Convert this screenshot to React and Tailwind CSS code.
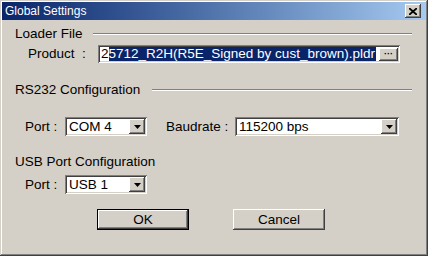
const raised =
  "shadow-[inset_-1px_-1px_#404040,inset_1px_1px_#ffffff,inset_-2px_-2px_#808080,inset_2px_2px_#d4d0c8]";
const sunken =
  "shadow-[inset_1px_1px_#808080,inset_-1px_-1px_#ffffff,inset_2px_2px_#404040,inset_-2px_-2px_#d4d0c8]";

const Arrow = () => (
  <div className={`flex h-full w-[16px] items-center justify-center bg-[#d4d0c8] ${raised}`}>
    <svg width="7" height="4" viewBox="0 0 7 4">
      <path d="M0 0h7L3.5 4z" fill="#000" />
    </svg>
  </div>
);

const Combo = ({ value, width }) => (
  <div className={`flex h-[19px] items-stretch bg-white p-[2px] ${sunken} ${width}`}>
    <span className="flex-1 pl-[2px] leading-[15px]">{value}</span>
    <Arrow />
  </div>
);

const GroupTitle = ({ children, gap }) => (
  <div className="flex items-center pl-[13px] pr-[14px]">
    <span className="leading-[16px]">{children}</span>
    <div className={`h-0 flex-1 border-t border-b border-t-[#808080] border-b-white ${gap}`} />
  </div>
);

export default function App() {
  return (
    <div
      className="h-[256px] w-[428px] bg-[#d4d0c8] p-[2px] text-[13.5px] text-black shadow-[inset_-1px_-1px_#404040,inset_1px_1px_#d4d0c8,inset_-2px_-2px_#808080,inset_2px_2px_#ffffff]"
      style={{ fontFamily: '"Liberation Sans", Arial, sans-serif' }}
    >
      <div className="flex h-[18px] items-center bg-gradient-to-r from-[#0a246a] to-[#a6caf0] pl-[3px] pr-[5px]">
        <span className="flex-1 text-[12px] leading-[18px] text-white">Global Settings</span>
        <div className={`flex h-[14px] w-[16px] items-center justify-center bg-[#d4d0c8] ${raised}`}>
          <svg width="8" height="7" viewBox="0 0 8 7">
            <path d="M0 0l8 7M8 0L0 7" stroke="#000" strokeWidth="1.8" />
          </svg>
        </div>
      </div>

      <div className="mt-[6px]">
        <GroupTitle gap="ml-[10px]">Loader File</GroupTitle>
      </div>

      <div className="mt-[3px] flex items-center">
        <span className="ml-[26px] w-[70px] leading-[16px]">Product&nbsp;&nbsp;:</span>
        <div className={`flex h-[18px] w-[302px] items-center bg-white p-[2px] ${sunken}`}>
          <div className="flex min-w-0 flex-1 overflow-hidden whitespace-nowrap leading-[14px]">
            <span className="pl-[1px]">2</span>
            <span className="bg-[#0a246a] pr-[1px] text-white">5712_R2H(R5E_Signed by cust_brown).pldr</span>
          </div>
          <div className={`flex h-[13px] w-[19px] items-center justify-center bg-[#d4d0c8] ${raised}`}>
            <span className="text-[9px] font-bold leading-[8px]">···</span>
          </div>
        </div>
      </div>

      <div className="mt-[19px]">
        <GroupTitle gap="ml-[12px]">RS232 Configuration</GroupTitle>
      </div>

      <div className="mt-[19px] flex items-center">
        <span className="ml-[23px] w-[40px] leading-[16px]">Port :</span>
        <Combo value="COM 4" width="w-[82px]" />
        <span className="ml-[19px] w-[69px] leading-[16px]">Baudrate :</span>
        <Combo value="115200 bps" width="w-[164px]" />
      </div>

      <div className="mt-[18px]">
        <div className="pl-[13px] leading-[16px]">USB Port Configuration</div>
      </div>

      <div className="mt-[5px] flex items-center">
        <span className="ml-[23px] w-[40px] leading-[16px]">Port :</span>
        <Combo value="USB 1" width="w-[82px]" />
      </div>

      <div className="mt-[15px] flex">
        <div className="ml-[95px] border border-black">
          <div className={`flex h-[19px] w-[90px] items-center justify-center bg-[#d4d0c8] ${raised}`}>
            <span className="leading-[16px]">OK</span>
          </div>
        </div>
        <div className={`ml-[44px] flex h-[21px] w-[92px] items-center justify-center bg-[#d4d0c8] ${raised}`}>
          <span className="leading-[16px]">Cancel</span>
        </div>
      </div>
    </div>
  );
}
